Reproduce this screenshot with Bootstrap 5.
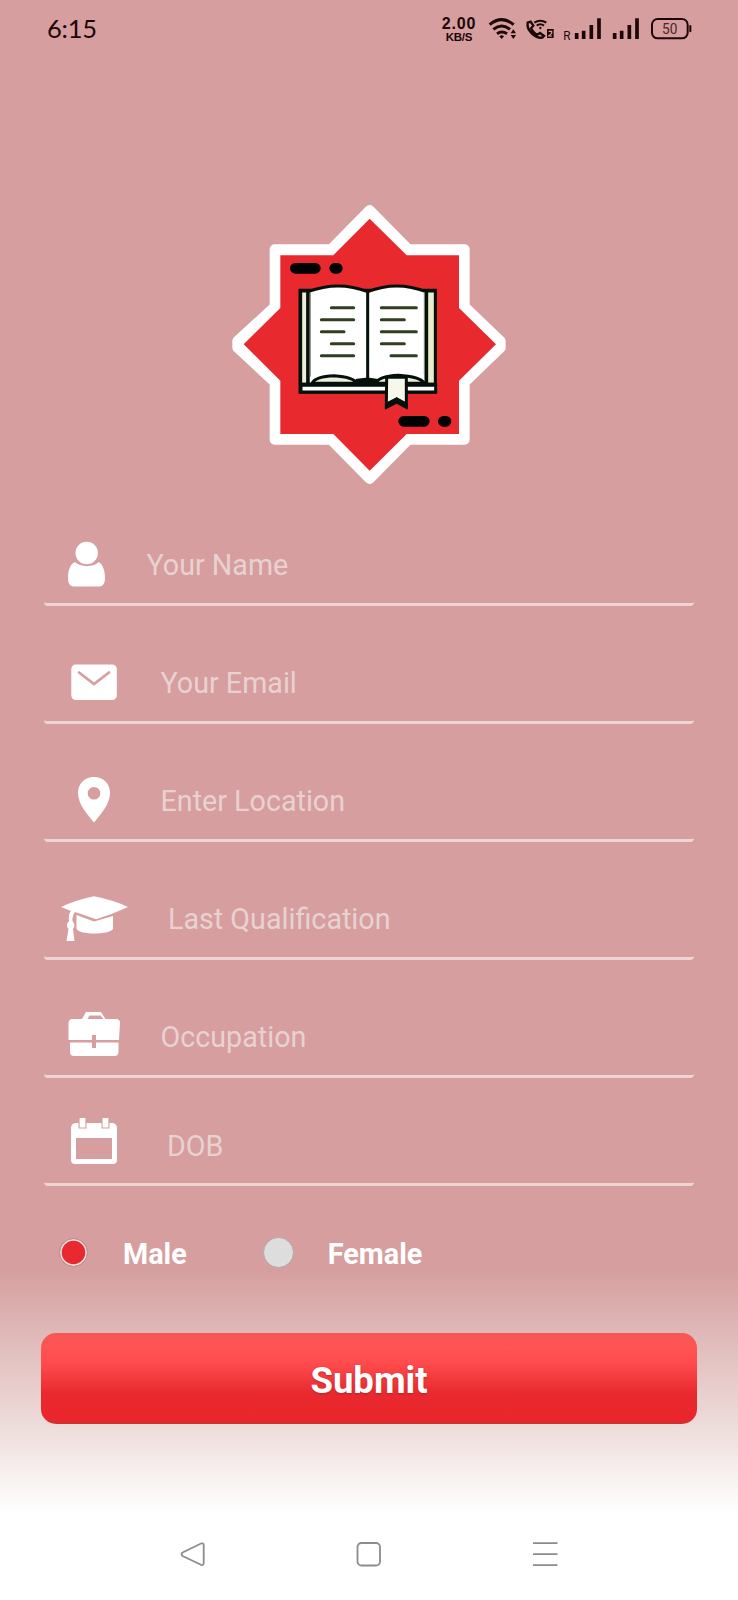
<!DOCTYPE html>
<html lang="en">
<head>
<meta charset="utf-8">
<meta name="viewport" content="width=device-width, initial-scale=1">
<title>Profile details</title>
<link href="https://cdn.jsdelivr.net/npm/bootstrap@5.3.0/dist/css/bootstrap.min.css" rel="stylesheet">
<style>
  body { font-family: Roboto, sans-serif; background: #fff; }
  .screen { width: 738px; height: 1600px; overflow: hidden;
    background: linear-gradient(#d69e9e 0 1268px, #deb5b5 1325px, #eedddb 1428px, #fff 1512px); }
  .status { height: 60px; padding: 0 43px 0 47px; color: #1c0708; }
  .clock { font: 25.5px/1 Lato, sans-serif; letter-spacing: -.2px; padding-bottom: 2px; }
  .rate { width: 38px; margin-right: 2px; font-family: "Liberation Sans", sans-serif; font-weight: 700; text-align: center; }
  .rate-num { font-size: 16px; line-height: 13px; letter-spacing: .9px; }
  .rate-unit { font-size: 11.5px; line-height: 14px; letter-spacing: -.3px; }
  .logo-box { padding: 135px 0 0 220px; height: 431px; }
  .fields { padding: 0 44px; }
  .field { height: 118px; border-bottom: 3px solid #eed5d4; border-radius: 4px; color: #e8d2d1; font-size: 28.7px; line-height: 34px; }
  .field-first { height: 115px; }
  .field-last { height: 108px; }
  .field svg { width: 100px; height: 80px; flex: none; fill: #fff; }
  .field label { padding-bottom: 21px; white-space: nowrap; }
  .field-last label { padding-bottom: 20px; }
  .ind-a { margin-left: 2.500px; } .ind-b { margin-left: 16.500px; } .ind-c { margin-left: 24px; } .ind-d { margin-left: 23px; }
  .genders { height: 147px; padding: 51px 0 0 59px; font-size: 28.8px; line-height: 34px; }
  .male { margin-left: 35px; }
  .female { margin-left: 33.500px; }
  .dot { width: 31px; height: 31px; border-radius: 50%; border: 1.5px solid #b5aaa9; background: #ddd; }
  .dot-off { margin-left: 76.500px; }
  .dot-on { width: 29px; height: 29px; margin-top: 1px; border: 1px solid #b5a3a2; background: #e82a2f; box-shadow: inset 0 0 0 1.7px #f3dedd; }
  .submit { display: block; width: 656px; height: 91px; margin-left: 41px; padding: 6px 0 0; border: 0; border-radius: 15px; color: #fff;
    font-size: 36.5px; font-weight: 700; text-shadow: 0 1px 2px rgba(120,30,30,.45);
    background: linear-gradient(#f75757 0, #ff5354 15%, #ff4c4e 32%, #e8292d 67%, #ea262c 94%, #d32e2e 100%); }
  .softkeys { margin-top: 118px; height: 28px; padding: 0 180px 0 180px; }
  .softkeys svg { fill: none; stroke: #8c8c8c; stroke-width: 1.8; }
</style>
</head>
<body>
<main class="screen d-flex flex-column">
  <header class="status d-flex align-items-center justify-content-between">
    <div class="clock">6:15</div>
    <div class="d-flex align-items-center">
      <div class="rate"><div class="rate-num">2.00</div><div class="rate-unit">KB/S</div></div>
      <svg width="215" height="60" viewBox="180 0 645 180" fill="none" stroke="#1c0708">
        <g stroke-width="9"><path d="M209 74Q245 44 281 74M220 88Q245 68 270 88M231 101Q246 91 261 101"/></g>
        <path fill="#1c0708" stroke="none" d="M238 109q7-7 14 0l-7 8zM272 100l8-12 8 12zM272 105l8 12 8-12z"/>
        <path stroke-width="7" d="M323 68l9-3 8 12-7 8q6 13 18 20l9-6 12 9-5 5c-22 3-48-22-44-45z"/>
        <path stroke-width="6" d="M343 68Q361 56 379 68M350 77Q361 69 372 77"/><circle cx="361" cy="84" r="3" fill="#1c0708"/>
        <rect x="381" y="87" width="20" height="27" fill="#1c0708" stroke="none"/>
        <path stroke="#d69e9e" stroke-width="3.5" d="M386 94h9v6l-9 8h10"/>
        <text x="430" y="119" font-family="Inter" font-size="35" fill="#1c0708" stroke="none" textLength="22" lengthAdjust="spacingAndGlyphs">R</text>
        <g stroke-width="11"><path d="M470 99v18M491 92v25M514 75v42M537 55v62M584 99v18M605 92v25M628 75v42M651 55v62"/></g>
        <rect x="696" y="57" width="107" height="58" rx="17" stroke-width="6"/>
        <path stroke-width="6" stroke-linecap="round" d="M811 78v16"/>
        <text x="726" y="102" font-family="Roboto" font-size="45" fill="#4a2526" stroke="none" textLength="46" lengthAdjust="spacingAndGlyphs">50</text>
      </svg>
    </div>
  </header>

  <div class="logo-box">
    <svg class="d-block" width="300" height="300" viewBox="0 0 900 900">
      <path fill="#fff" stroke="#fff" stroke-width="30" stroke-linejoin="round" d="M449 45L565 163H734V335L842 438V458L734 562V734H565L449 852 333 734H164V562L52 458V438L164 335V163H333z"/>
      <path fill="#e82a2f" d="M449 71L560 181H717V339L828 448 717 557V717H560L449 827 340 717H181V557L71 448 181 339V181H340z"/>
      <g stroke="#000" stroke-width="32" stroke-linecap="round"><path d="M226 220h60M344 220h8M551 679h62M670 679h8"/></g>
      <g stroke="#05100a" stroke-width="9">
        <path fill="#fff" d="M240 286H646V592H240z"/>
        <path fill="#e9edce" d="M620 288h26v280h-26z"/>
        <path fill="#eceedd" d="M242 288h22v280h-22z"/>
        <path fill="#fff" d="M264 290Q355 256 443 290 530 256 618 290V568H264z"/>
        <path fill="#eceedd" d="M276 565Q285 544 343 542 400 546 412 565zM468 565Q475 544 535 541 600 545 614 565z"/>
        <path fill="none" d="M264 284V568M443 284V568M240 568H650"/>
        <path fill="#05100a" d="M412 556L443 552 470 556V568H412z"/>
        <path fill="#fff" d="M243 571H647V591H243z"/>
        <path fill="#f7f8ec" d="M500 547H559V632L530 612 499 632z"/>
      </g>
      <path fill="#05100a" d="M495 644V624L530 607 563 624V644L530 626z"/>
      <path fill="none" stroke="#7d836f" stroke-width="3" d="M271 292V545M613 292V540"/>
      <g fill="none" stroke="#2f3d20" stroke-width="9" stroke-linecap="round"><path d="M334 338h67M304 374h97M304 410h68M334 446h67M304 482h97M484 338h105M484 374h69M484 410h105M484 446h69M513 482h76"/></g>
    </svg>
  </div>

  <form class="fields">
    <div class="field field-first d-flex align-items-end">
      <svg viewBox="44 523 100 80"><circle cx="86.700" cy="553" r="11.200"/><path d="M75 562C80 567.500 94 567.500 98.500 562 103 564 105 571 105 578 105 584 103 586.500 98 586.500H75C70 586.500 68 584 68 578 68 571 70 564 75 562z"/></svg>
      <label class="ind-a">Your Name</label>
    </div>
    <div class="field d-flex align-items-end">
      <svg viewBox="44 641 100 80"><rect x="71.300" y="664.500" width="45.500" height="35.500" rx="4.500"/><path d="M79 672.500L94 684 109 672.500" fill="none" stroke="#d69e9e" stroke-width="2.700" stroke-linecap="round"/></svg>
      <label class="ind-b">Your Email</label>
    </div>
    <div class="field d-flex align-items-end">
      <svg viewBox="44 759 100 80"><path fill-rule="evenodd" d="M94 777C84 777 78 784 78 793 78 804 87 814 94 822.500 101 814 110 804 110 793 110 784 104 777 94 777zM94 787a6.300 6.300 0 1 1 0 12.600a6.300 6.300 0 1 1 0-12.600z"/></svg>
      <label class="ind-b">Enter Location</label>
    </div>
    <div class="field d-flex align-items-end">
      <svg viewBox="44 877 100 80"><path d="M61 907Q76 900 94 896.300 113 900 128 907 113 914 96 919.300 84 915 75 912 72 916 72.500 921 76 925 73 929L74.500 941H66.500L68.500 929Q65 925 69 921 68 914 71 911z"/><path d="M76.500 915L94 921.500 113 916V929C109 935 80 935 76.500 929z"/></svg>
      <label class="ind-c">Last Qualification</label>
    </div>
    <div class="field d-flex align-items-end">
      <svg viewBox="44 995 100 80"><path fill-rule="evenodd" d="M72 1019H82L86 1012H101L105.500 1019H116Q120 1019 120 1023L119 1040H96V1035H92V1040H68.500V1023Q69 1019 72 1019zM87.500 1019H103.500L100.500 1015.500H89.500z"/><path d="M70 1042.500H92V1048H96V1042.500H118.500V1052Q118 1056 115 1056H74Q70 1056 70 1052z"/></svg>
      <label class="ind-b">Occupation</label>
    </div>
    <div class="field field-last d-flex align-items-end">
      <svg viewBox="44 1103 100 80"><path fill-rule="evenodd" d="M75 1123H78.500V1128.500H86.500V1123H101.500V1128.500H109.500V1123H113Q117 1124 117 1128V1160Q117 1164 113 1164H75Q71 1164 71 1160V1128Q71 1124 75 1123zM76 1138V1159H112V1138z"/><path d="M79.600 1118h5.800v9.500h-5.800zM102.600 1118h5.800v9.500h-5.800z"/></svg>
      <label class="ind-d">DOB</label>
    </div>
  </form>

  <div class="genders d-flex text-white fw-bold">
    <span class="dot dot-on"></span><span class="male">Male</span>
    <span class="dot dot-off"></span><span class="female">Female</span>
  </div>

  <button type="button" class="submit">Submit</button>

  <nav class="softkeys d-flex justify-content-between">
    <svg width="26" height="26" viewBox="0 0 26 26"><path d="M2.600 10.500L21 1.500Q23.600 .8 23.700 3V21Q23.500 23.800 21 22.800L2.600 14Q.4 12 2.600 10.500z"/></svg>
    <svg width="26" height="26" viewBox="0 0 26 26"><rect x="1.500" y="1" width="22.500" height="22.500" rx="4"/></svg>
    <svg width="26" height="26" viewBox="0 0 26 26"><path d="M1 1.200H25.500M1 12.200H25.500M1 23.200H25.500"/></svg>
  </nav>
</main>
<script src="https://cdn.jsdelivr.net/npm/bootstrap@5.3.0/dist/js/bootstrap.bundle.min.js"></script>
</body>
</html>
